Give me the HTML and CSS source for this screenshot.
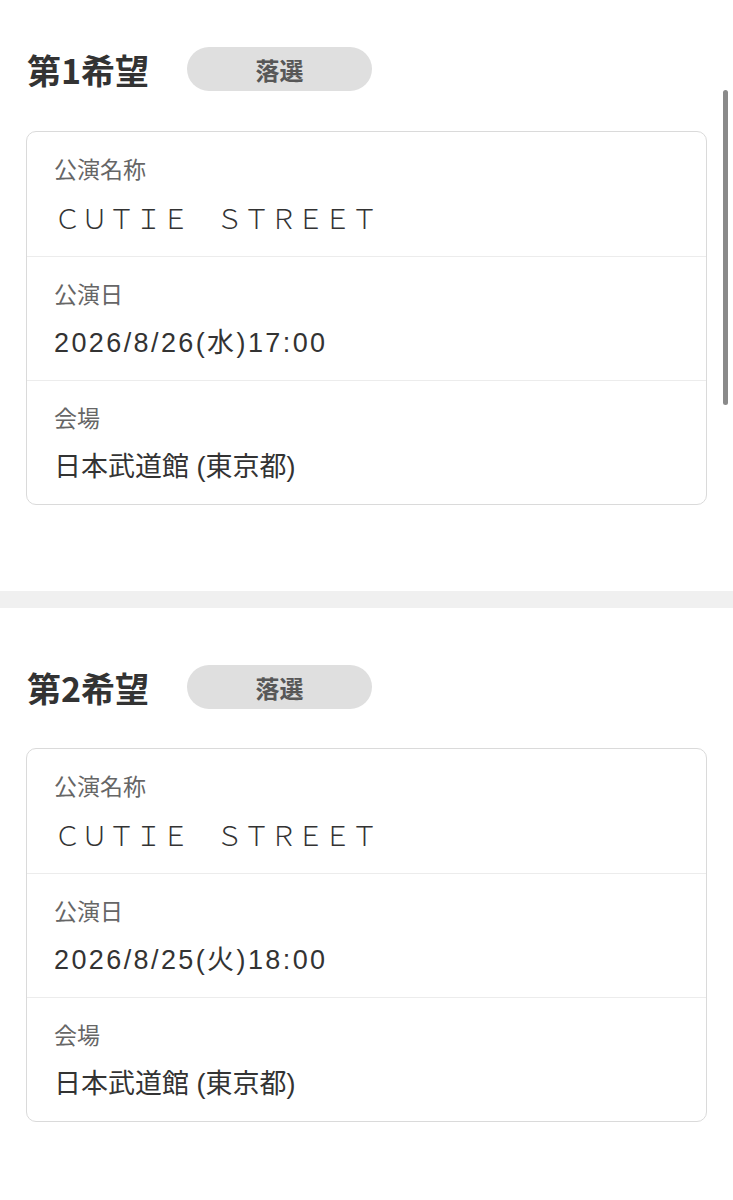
FILE: index.html
```html
<!DOCTYPE html>
<html lang="ja">
<head>
    <meta charset="UTF-8">
    <title>抽選結果</title>
    <link rel="stylesheet" href="styles.css">
</head>
<body>
    <div class="kibou first">
        <div class="kibou-head">
            <h2>第1希望</h2>
            <span class="badge">落選</span>
        </div>
        <div class="card">
            <div class="row">
                <div class="label">公演名称</div>
                <div class="value wide">ＣＵＴＩＥ　ＳＴＲＥＥＴ</div>
            </div>
            <div class="row">
                <div class="label">公演日</div>
                <div class="value date">2026/8/26(水)17:00</div>
            </div>
            <div class="row">
                <div class="label">会場</div>
                <div class="value">日本武道館 (東京都)</div>
            </div>
        </div>
    </div>

    <div class="band"></div>

    <div class="kibou">
        <div class="kibou-head">
            <h2>第2希望</h2>
            <span class="badge">落選</span>
        </div>
        <div class="card">
            <div class="row">
                <div class="label">公演名称</div>
                <div class="value wide">ＣＵＴＩＥ　ＳＴＲＥＥＴ</div>
            </div>
            <div class="row">
                <div class="label">公演日</div>
                <div class="value date">2026/8/25(火)18:00</div>
            </div>
            <div class="row">
                <div class="label">会場</div>
                <div class="value">日本武道館 (東京都)</div>
            </div>
        </div>
    </div>

    <div class="scrollbar"></div>
</body>
</html>
```

FILE: styles.css
```css
body{
    margin: 0;
    background-color: #fff;
    font-family: "Liberation Sans", "Noto Sans CJK JP", sans-serif;
    color: #333;
}
.kibou{
    padding: 57px 26px 86px 26px;
}
.kibou.first{
    padding-top: 47px;
}
.kibou-head{
    display: flex;
    align-items: center;
    gap: 38px;
    height: 44px;
    margin-bottom: 39px;
}
.kibou-head h2{
    margin: 0 0 0 1px;
    font-family: "Noto Sans CJK JP", sans-serif;
    font-size: 34px;
    font-weight: bold;
    color: #333;
}
.badge{
    width: 185px;
    height: 44px;
    border-radius: 22px;
    background-color: #dfdfdf;
    color: #575757;
    font-family: "Noto Sans CJK JP", sans-serif;
    font-size: 24px;
    font-weight: bold;
    display: flex;
    align-items: center;
    justify-content: center;
}
.kibou.first .kibou-head{
    margin-bottom: 40px;
}
.card{
    border: 1px solid #dadada;
    border-radius: 10px;
}
.row{
    padding: 21px 27px 17px 27px;
    border-top: 1px solid #ececec;
}
.row:first-child{
    border-top: none;
    padding-bottom: 18px;
}
.label{
    font-family: "Noto Sans CJK JP", sans-serif;
    font-size: 23px;
    line-height: 30px;
    color: #666;
    margin-bottom: 15px;
}
.value{
    font-size: 27px;
    line-height: 40px;
    color: #333;
}
.value.date{
    letter-spacing: 2.4px;
}
.value.wide{
    font-family: "Noto Sans CJK JP", sans-serif;
    font-weight: 300;
}
.band{
    height: 17px;
    background-color: #f0f0f0;
}
.scrollbar{
    position: absolute;
    left: 723px;
    top: 90px;
    width: 5px;
    height: 315px;
    border-radius: 3px;
    background-color: #8a8a8a;
}
```
